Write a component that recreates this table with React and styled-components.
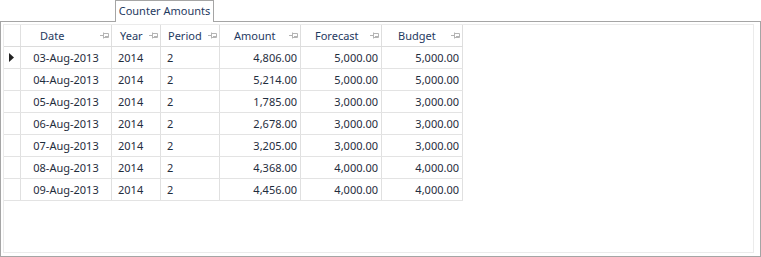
import React from "react";
import styled, { createGlobalStyle } from "styled-components";

const GlobalStyle = createGlobalStyle`
  html, body {
    margin: 0;
    padding: 0;
    background: #ffffff;
  }
  body {
    font-family: "Noto Sans", "Open Sans", sans-serif;
    font-size: 11px;
    color: #1f2d3d;
  }
`;

const Frame = styled.div`
  width: 761px;
  height: 257px;
  display: flex;
  flex-direction: column;
`;

const TabStrip = styled.div`
  height: 21px;
  display: flex;
  padding-left: 115px;
`;

const Tab = styled.div`
  position: relative;
  z-index: 1;
  width: 99px;
  height: 22px;
  box-sizing: border-box;
  border: 1px solid #a5a5a5;
  border-bottom: none;
  background: #ffffff;
  display: flex;
  align-items: center;
  justify-content: center;
  padding-bottom: 3px;
  color: #1f3a5f;
  white-space: nowrap;
`;

const Panel = styled.div`
  flex: 1;
  box-sizing: border-box;
  border: 1px solid #a5a5a5;
  padding: 2px 6px 3px 2px;
  display: flex;
`;

const GridBox = styled.div`
  flex: 1;
  border: 1px solid #ebebeb;
  display: flex;
  flex-direction: column;
  align-items: flex-start;
`;

const Row = styled.div`
  display: grid;
  grid-template-columns: 17px 91px 49px 59px 81px 81px 81px;
  height: 22px;
  box-sizing: border-box;
  border-bottom: 1px solid ${({ head }) => (head ? "#dcdcdc" : "#e3e3e3")};
`;

const HeadCell = styled.div`
  box-sizing: border-box;
  border-right: 1px solid #dedede;
  display: flex;
  align-items: center;
  padding-left: ${({ pad }) => pad}px;
  padding-right: 2px;
  color: #1f3a5f;
  white-space: nowrap;
`;

const Cell = styled.div`
  box-sizing: border-box;
  border-right: 1px solid #e0e0e0;
  display: flex;
  align-items: center;
  justify-content: ${({ align }) =>
    align === "right" ? "flex-end" : align === "center" ? "center" : "flex-start"};
  padding: 0 3px 0 ${({ align }) => (align === "left" ? 6 : 3)}px;
  white-space: nowrap;
`;

const Indicator = styled.div`
  box-sizing: border-box;
  border-right: 1px solid #e0e0e0;
  display: flex;
  align-items: center;
  padding-left: 5px;
`;

const Pin = styled.svg`
  margin-left: auto;
  flex: none;
`;

const PinIcon = () => (
  <Pin width="9" height="7" viewBox="0 0 9 7">
    <path d="M0 3.5H3M3.5 0.5V6.5M4 1.5H8.5V5.5H4M5 4.5H8" stroke="#b4b4b4" strokeWidth="1" fill="none" />
  </Pin>
);

const columns = [
  { title: "Date", pad: 19, align: "center" },
  { title: "Year", pad: 8, align: "left" },
  { title: "Period", pad: 7, align: "left" },
  { title: "Amount", pad: 14, align: "right" },
  { title: "Forecast", pad: 14, align: "right" },
  { title: "Budget", pad: 16, align: "right" },
];

const rows = [
  ["03-Aug-2013", "2014", "2", "4,806.00", "5,000.00", "5,000.00"],
  ["04-Aug-2013", "2014", "2", "5,214.00", "5,000.00", "5,000.00"],
  ["05-Aug-2013", "2014", "2", "1,785.00", "3,000.00", "3,000.00"],
  ["06-Aug-2013", "2014", "2", "2,678.00", "3,000.00", "3,000.00"],
  ["07-Aug-2013", "2014", "2", "3,205.00", "3,000.00", "3,000.00"],
  ["08-Aug-2013", "2014", "2", "4,368.00", "4,000.00", "4,000.00"],
  ["09-Aug-2013", "2014", "2", "4,456.00", "4,000.00", "4,000.00"],
];

export default function App() {
  return (
    <Frame>
      <GlobalStyle />
      <TabStrip>
        <Tab>Counter Amounts</Tab>
      </TabStrip>
      <Panel>
        <GridBox>
          <Row head>
            <Indicator />
            {columns.map((c) => (
              <HeadCell key={c.title} pad={c.pad}>
                {c.title}
                <PinIcon />
              </HeadCell>
            ))}
          </Row>
          {rows.map((r, i) => (
            <Row key={i}>
              <Indicator>
                {i === 0 && (
                  <svg width="5" height="9" viewBox="0 0 5 9">
                    <path d="M0 0L5 4.5L0 9Z" fill="#222" />
                  </svg>
                )}
              </Indicator>
              {r.map((v, j) => (
                <Cell key={j} align={columns[j].align}>
                  {v}
                </Cell>
              ))}
            </Row>
          ))}
        </GridBox>
      </Panel>
    </Frame>
  );
}
